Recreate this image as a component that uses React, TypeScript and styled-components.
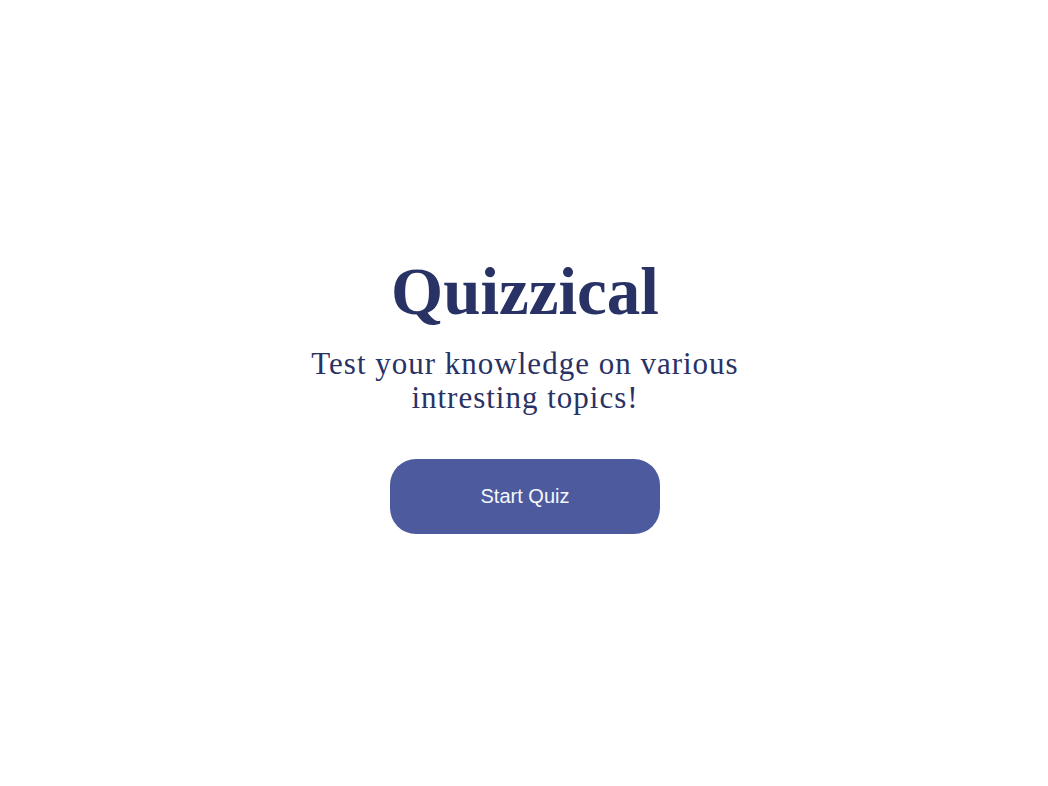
import React from "react";
import styled, { createGlobalStyle } from "styled-components";

const GlobalStyle = createGlobalStyle`
  *, *::before, *::after {
    box-sizing: border-box;
  }

  body {
    margin: 0;
    background: #ffffff;
    color: #293264;
    font-family: "Liberation Serif", "Times New Roman", serif;
  }
`;

const Page = styled.main`
  min-height: 100vh;
  display: flex;
  flex-direction: column;
  align-items: center;
  justify-content: center;
  padding: 19px 16px 16px 18px;
  text-align: center;
`;

const Title = styled.h1`
  margin: 0;
  font-size: 67px;
  line-height: 72px;
  font-weight: 700;
`;

const Tagline = styled.p`
  margin: 20px 0 44px;
  max-width: 450px;
  font-size: 31px;
  line-height: 34px;
  letter-spacing: 1px;
`;

const StartButton = styled.button`
  width: 270px;
  max-width: 100%;
  height: 75px;
  border: 0;
  border-radius: 26px;
  background: #4d5b9e;
  color: #f5f7fb;
  font-family: "Liberation Sans", Arial, sans-serif;
  font-size: 20px;
  cursor: pointer;
`;

export default function App() {
  return (
    <>
      <GlobalStyle />
      <Page>
        <Title>Quizzical</Title>
        <Tagline>Test your knowledge on various intresting topics!</Tagline>
        <StartButton type="button">Start Quiz</StartButton>
      </Page>
    </>
  );
}
